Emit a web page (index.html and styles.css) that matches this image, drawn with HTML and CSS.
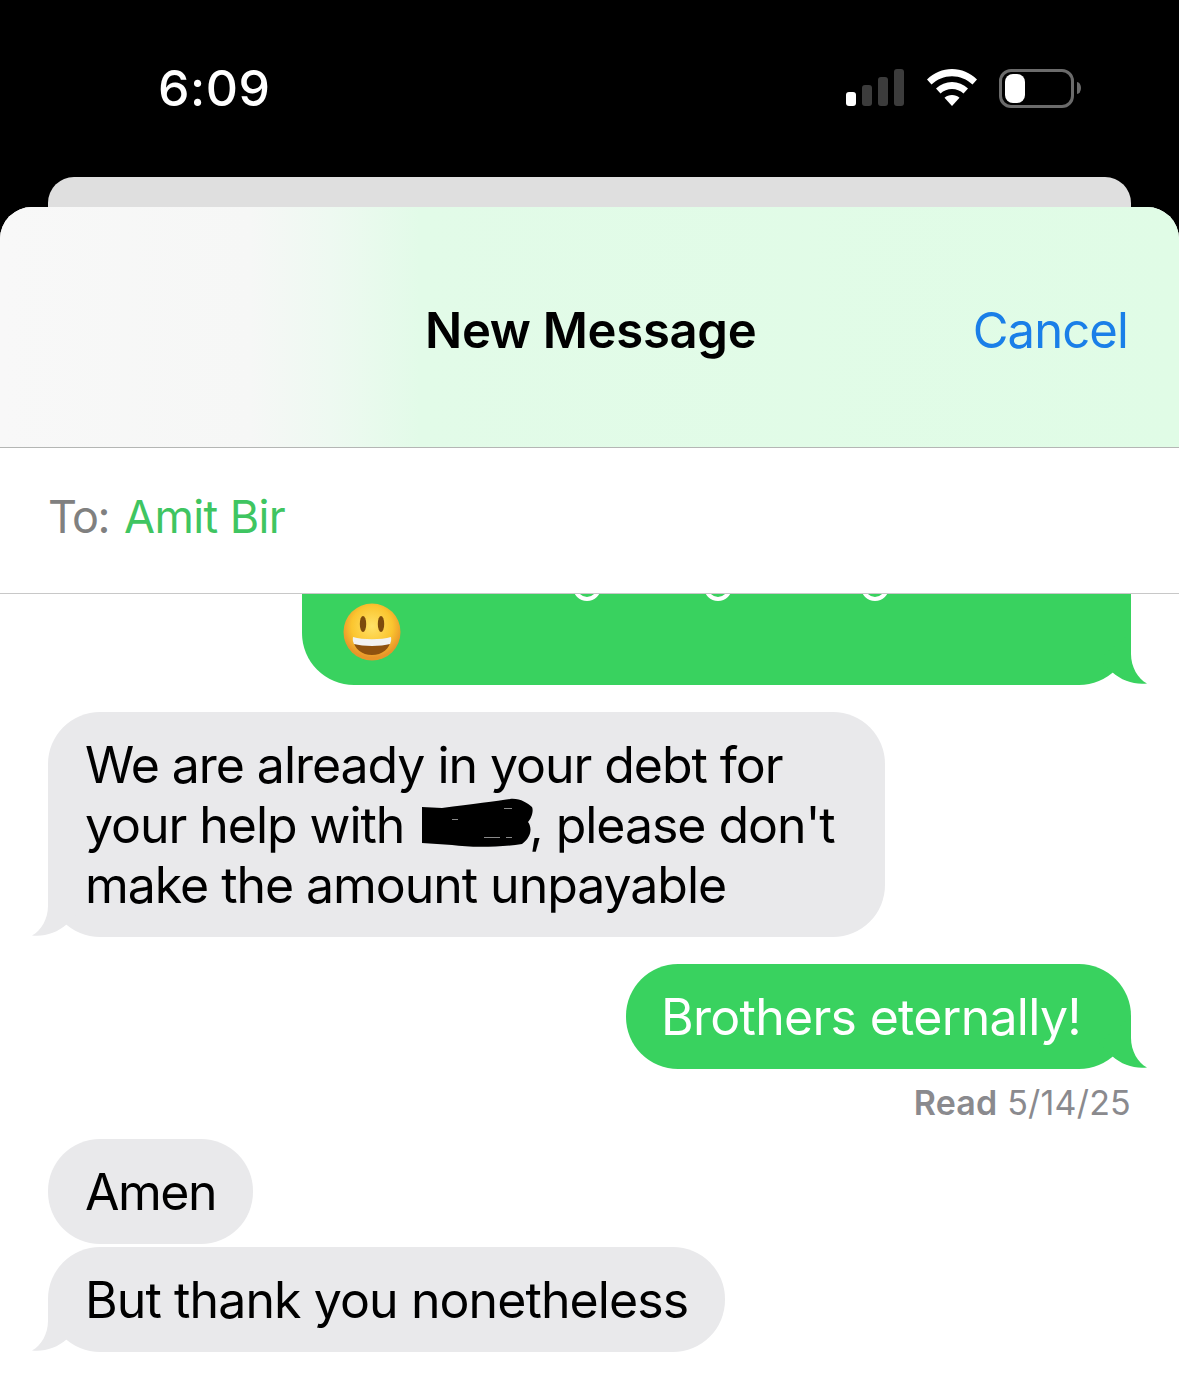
FILE: index.html
```html
<!DOCTYPE html>
<html>
<head>
  <meta charset="UTF-8">
  <title>New Message</title>
  <link rel="stylesheet" href="styles.css">
</head>
<body>
  <div class="status-bar">
    <span class="clock">6:09</span>
    <div class="status-icons">
      <svg class="signal" width="58" height="38" viewBox="0 0 58 38">
        <rect x="0" y="23" width="10" height="14" rx="3" fill="#fff"/>
        <rect x="16" y="16" width="10" height="21" rx="3" fill="#3c3c3c"/>
        <rect x="32" y="8" width="10" height="29" rx="3" fill="#3c3c3c"/>
        <rect x="48" y="0" width="10" height="37" rx="3" fill="#3c3c3c"/>
      </svg>
      <svg class="wifi" width="50" height="38" viewBox="0 0 50 38">
        <path d="M25 0C34.500 0 43 3.800 50 10.500L45.500 15.500C39.800 10.200 32.800 7.200 25 7.200C17.200 7.200 10.200 10.200 4.500 15.500L0 10.500C7 3.800 15.500 0 25 0Z" fill="#fff"/>
        <path d="M25 13C31 13 36.500 15.300 41 19.500L36.500 24.500C33.300 21.600 29.400 20 25 20C20.600 20 16.700 21.600 13.500 24.500L9 19.500C13.500 15.300 19 13 25 13Z" fill="#fff"/>
        <path d="M25 26C27.900 26 30.400 27 32.500 28.800L25 37L17.500 28.800C19.600 27 22.100 26 25 26Z" fill="#fff"/>
      </svg>
      <div class="battery">
        <div class="battery-level"></div>
      </div>
      <div class="battery-cap"></div>
    </div>
  </div>

  <div class="card-behind"></div>

  <div class="sheet">
    <div class="nav">
      <span class="nav-title">New Message</span>
      <span class="nav-cancel">Cancel</span>
    </div>
    <div class="to-row">
      <span class="to-label">To:</span>
      <span class="to-name">Amit Bir</span>
    </div>

    <div class="thread">
      <div class="row row-sent">
        <div class="bubble sent first-bubble">
          <span class="cut-g cut-g1"></span>
          <span class="cut-g cut-g2"></span>
          <span class="cut-g cut-g3"></span>
          <svg class="emoji" width="58" height="58" viewBox="0 0 58 58">
            <defs>
              <radialGradient id="face" cx="50%" cy="40%" r="55%">
                <stop offset="0" stop-color="#ffe268"/>
                <stop offset="0.65" stop-color="#fbc52f"/>
                <stop offset="1" stop-color="#e8952a"/>
              </radialGradient>
            </defs>
            <circle cx="29" cy="29" r="28.500" fill="url(#face)"/>
            <ellipse cx="20" cy="21" rx="3.200" ry="8" fill="#7d4a0c"/>
            <ellipse cx="38" cy="21" rx="3.200" ry="8" fill="#7d4a0c"/>
            <path d="M10 36C20 40 38 40 48 36C47 46 39 52 29 52C19 52 11 46 10 36Z" fill="#8f520f"/>
            <path d="M10 34C20 37 38 37 48 34C48.500 37 48 39 47 41C38 43.500 20 43.500 11 41C10 39 9.500 37 10 34Z" fill="#f2f2f2"/>
          </svg>
          <svg class="tail" width="48" height="52" viewBox="0 0 48 52"><path d="M32 0V21C32 34 39 46 48 50.500C36 52 23 48 13 39L0 26Z"/></svg>
        </div>
      </div>

      <div class="row">
        <div class="bubble received wide-bubble">
          We are already in your debt for<br>
          your help with <span class="redacted"><svg width="112" height="50" viewBox="0 0 112 50"><path d="M0 8L20 9C50 5 75 2 88 0C98 -1 105 4 110 8C112 12 109 20 106 23C110 28 110 38 100 45C80 48 50 49 30 46L0 44Z"/><path class="fleck" d="M30 20H36V21H30ZM62 38H78V39H62ZM84 38H90V39H84ZM82 9H90V10H82Z"/></svg></span>, please don't<br>
          make the amount unpayable
          <svg class="tail" width="48" height="52" viewBox="0 0 48 52"><path d="M32 0V21C32 34 39 46 48 50.500C36 52 23 48 13 39L0 26Z"/></svg>
        </div>
      </div>

      <div class="row row-sent">
        <div class="bubble sent brothers">
          Brothers eternally!
          <svg class="tail" width="48" height="52" viewBox="0 0 48 52"><path d="M32 0V21C32 34 39 46 48 50.500C36 52 23 48 13 39L0 26Z"/></svg>
        </div>
      </div>
      <div class="read-line"><b>Read</b> 5/14/25</div>

      <div class="row row-amen">
        <div class="bubble received amen">Amen</div>
      </div>
      <div class="row row-last">
        <div class="bubble received">
          But thank you nonetheless
          <svg class="tail" width="48" height="52" viewBox="0 0 48 52"><path d="M32 0V21C32 34 39 46 48 50.500C36 52 23 48 13 39L0 26Z"/></svg>
        </div>
      </div>
    </div>
  </div>
</body>
</html>
```

FILE: styles.css
```css
* {
  box-sizing: border-box;
}

html, body {
  margin: 0;
  padding: 0;
}

body {
  width: 1179px;
  height: 1395px;
  overflow: hidden;
  background: #000;
  font-family: Inter, "Liberation Sans", sans-serif;
}

.status-bar {
  height: 177px;
  padding: 0 98px 0 158px;
  display: flex;
  justify-content: space-between;
  align-items: flex-start;
  color: #fff;
}

.clock {
  margin-top: 57px;
  font-size: 50px;
  line-height: 62px;
  font-weight: 500;
  letter-spacing: 0.5px;
}

.status-icons {
  margin-top: 69px;
  display: flex;
  align-items: flex-start;
}

.signal {
  margin-right: 23px;
}

.wifi {
  margin-right: 22px;
}

.battery {
  width: 75px;
  height: 39px;
  padding: 2px 3px;
  border: 3px solid #6b6b6b;
  border-radius: 12px;
}

.battery-level {
  width: 20px;
  height: 29px;
  border-radius: 8px;
  background: #fff;
}

.battery-cap {
  width: 4px;
  height: 12px;
  margin: 13px 0 0 3px;
  background: #6b6b6b;
  border-radius: 0 100% 100% 0 / 0 50% 50% 0;
}

.card-behind {
  height: 30px;
  margin: 0 48px;
  background: #dfdfdf;
  border-radius: 26px 26px 0 0;
}

.sheet {
  height: 1188px;
  background: #fff;
  border-radius: 32px 32px 0 0;
  overflow: hidden;
}

.nav {
  height: 241px;
  padding: 6px 51px 0 425px;
  display: flex;
  align-items: center;
  justify-content: space-between;
  border-bottom: 1px solid #b4b6b4;
  background: linear-gradient(90deg, #f8f8f8 0, #f6f7f6 250px, #eef9f1 330px, #e2fbe8 420px, #e0fce6 100%);
}

.nav-title {
  font-size: 49px;
  font-weight: 600;
  letter-spacing: -0.3px;
  color: #000;
}

.nav-cancel {
  font-size: 49px;
  letter-spacing: -0.9px;
  color: #1a7fe8;
}

.to-row {
  height: 146px;
  padding: 0 48px 8px;
  display: flex;
  align-items: center;
  gap: 15px;
  border-bottom: 1px solid #c8c8c8;
  font-size: 45px;
  letter-spacing: -0.6px;
}

.to-label {
  color: #808080;
  letter-spacing: -1.5px;
}

.to-name {
  color: #3fc561;
}

.thread {
  height: 801px;
  padding: 0 48px;
  overflow: hidden;
}

.row {
  display: flex;
  margin-top: 27px;
}

.row:first-child {
  margin-top: -69px;
}

.row-sent {
  justify-content: flex-end;
}

.bubble {
  position: relative;
  padding: 23px 37px 22px;
  border-radius: 52px;
  font-size: 50px;
  line-height: 60px;
  letter-spacing: -0.9px;
}

.sent {
  background: #39d25f;
  color: #fff;
}

.received {
  background: #e9e9eb;
  color: #000;
}

.first-bubble {
  width: 829px;
  height: 160px;
}

.wide-bubble {
  width: 837px;
  letter-spacing: -1.05px;
}

.brothers {
  padding-left: 35px;
  padding-right: 50px;
  letter-spacing: -0.7px;
}

.amen {
  letter-spacing: -1.5px;
}

.emoji {
  position: absolute;
  left: 41px;
  top: 78px;
}

.cut-g {
  position: absolute;
  top: 48px;
  width: 28px;
  height: 28px;
  border: 4px solid #fff;
  border-radius: 50%;
}

.cut-g1 {
  left: 271px;
}

.cut-g2 {
  left: 402px;
}

.cut-g3 {
  left: 559px;
}

.tail {
  position: absolute;
  right: -16px;
  bottom: 0;
}

.sent .tail {
  fill: #39d25f;
}

.received .tail {
  right: auto;
  left: -16px;
  transform: scaleX(-1);
  fill: #e9e9eb;
}

.redacted {
  display: inline-block;
  width: 107px;
  height: 50px;
  margin-left: 5px;
  vertical-align: -6px;
}

.redacted svg {
  display: block;
  overflow: visible;
}

.fleck {
  fill: #8a8a8a;
}

.read-line {
  margin-top: 14px;
  text-align: right;
  font-size: 34px;
  line-height: 40px;
  color: #8a8a8e;
  letter-spacing: 0.2px;
}

.read-line b {
  font-weight: 600;
}

.row-amen {
  margin-top: 16px;
}

.row-last {
  margin-top: 3px;
}
```
